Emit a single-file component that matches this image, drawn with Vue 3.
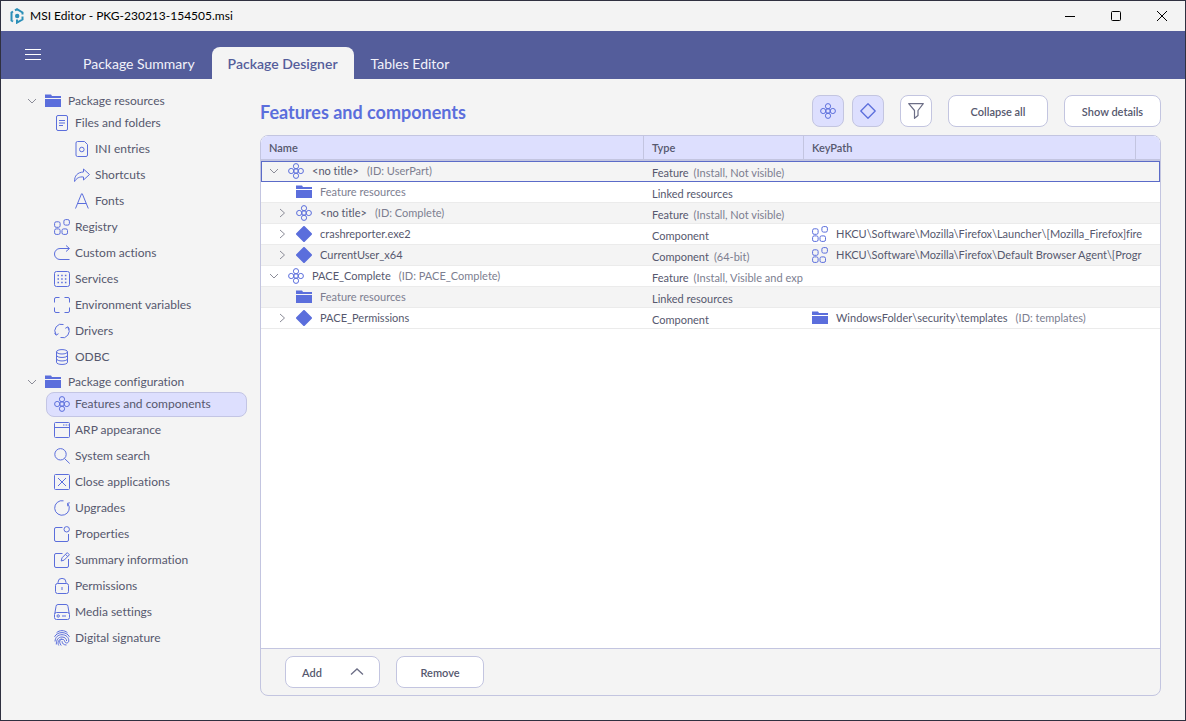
<script setup>
import { ref } from 'vue'

const tabs = ['Package Summary', 'Package Designer', 'Tables Editor']
const activeTab = ref('Package Designer')
const activeItem = ref('Features and components')

const groups = [
  {
    label: 'Package resources',
    items: [
      { label: 'Files and folders', icon: 'file' },
      { label: 'INI entries', icon: 'ini', nested: true },
      { label: 'Shortcuts', icon: 'shortcut', nested: true },
      { label: 'Fonts', icon: 'font', nested: true },
      { label: 'Registry', icon: 'registry' },
      { label: 'Custom actions', icon: 'action' },
      { label: 'Services', icon: 'services' },
      { label: 'Environment variables', icon: 'env' },
      { label: 'Drivers', icon: 'drivers' },
      { label: 'ODBC', icon: 'database' }
    ]
  },
  {
    label: 'Package configuration',
    items: [
      { label: 'Features and components', icon: 'feature' },
      { label: 'ARP appearance', icon: 'window' },
      { label: 'System search', icon: 'search' },
      { label: 'Close applications', icon: 'close-app' },
      { label: 'Upgrades', icon: 'upgrade' },
      { label: 'Properties', icon: 'properties' },
      { label: 'Summary information', icon: 'edit' },
      { label: 'Permissions', icon: 'lock' },
      { label: 'Media settings', icon: 'media' },
      { label: 'Digital signature', icon: 'fingerprint' }
    ]
  }
]

const rows = [
  { level: 0, toggle: 'down', icon: 'feature', name: '<no title>', id: '(ID: UserPart)', type: 'Feature', note: '(Install, Not visible)' },
  { level: 1, icon: 'folder', name: 'Feature resources', muted: true, type: 'Linked resources' },
  { level: 1, toggle: 'right', icon: 'feature', name: '<no title>', id: '(ID: Complete)', type: 'Feature', note: '(Install, Not visible)' },
  { level: 1, toggle: 'right', icon: 'component', name: 'crashreporter.exe2', type: 'Component', keyIcon: 'registry', key: 'HKCU\\Software\\Mozilla\\Firefox\\Launcher\\[Mozilla_Firefox]fire' },
  { level: 1, toggle: 'right', icon: 'component', name: 'CurrentUser_x64', type: 'Component', note: '(64-bit)', keyIcon: 'registry', key: 'HKCU\\Software\\Mozilla\\Firefox\\Default Browser Agent\\[Progr' },
  { level: 0, toggle: 'down', icon: 'feature', name: 'PACE_Complete', id: '(ID: PACE_Complete)', type: 'Feature', note: '(Install, Visible and exp' },
  { level: 1, icon: 'folder', name: 'Feature resources', muted: true, type: 'Linked resources' },
  { level: 1, toggle: 'right', icon: 'component', name: 'PACE_Permissions', type: 'Component', keyIcon: 'folder', key: 'WindowsFolder\\security\\templates', keyId: '(ID: templates)' }
]
const selectedRow = ref(0)
</script>

<template>
  <div class="window">
    <svg class="sprite" aria-hidden="true">
      <symbol id="i-folder" viewBox="0 0 16 16"><path d="M0 1.500h6l1 1.500H16v2H0z M0 6h16v8H0z" fill="currentColor" stroke="none" /></symbol>
      <symbol id="i-file" viewBox="0 0 16 16"><rect x="2.500" y=".5" width="11" height="15" rx="1.500" /><path d="M5 5.500h6M5 8h6M5 10.500h4" /></symbol>
      <symbol id="i-ini" viewBox="0 0 16 16"><path d="M3.500.5h7l3 3v10.500a1.500 1.500 0 0 1-1.500 1.500H3.500A1.500 1.500 0 0 1 2 14V2A1.500 1.500 0 0 1 3.500.5z" /><circle cx="7.800" cy="8.500" r="2.300" /></symbol>
      <symbol id="i-shortcut" viewBox="0 0 16 16"><path d="M9.500 2l6 5.500-6 5.500v-3C5.500 9.500 2.500 11 .6 14.500.2 9 3.500 5.200 9.500 5z" stroke-linejoin="round" /></symbol>
      <symbol id="i-font" viewBox="0 0 16 16"><path d="M1.500 15.500L7.500.8h.8l6 14.700M3.800 10.500h8.400" /></symbol>
      <symbol id="i-registry" viewBox="0 0 16 16"><rect x=".6" y="2.800" width="5.500" height="5.500" rx="1.600" /><rect x="9.900" y=".6" width="5.500" height="5.500" rx="1.600" /><rect x=".6" y="9.900" width="5.500" height="5.500" rx="1.600" /><rect x="8" y="9.900" width="5.500" height="5.500" rx="1.600" /></symbol>
      <symbol id="i-action" viewBox="0 0 16 16"><path d="M15 3.500H6a5.500 5.500 0 0 0 0 11h9.500M12 .5l3.500 3-3.500 3" /></symbol>
      <symbol id="i-services" viewBox="0 0 16 16"><rect x=".5" y=".5" width="15" height="15" rx="2" /><path d="M3.500 4.500h9M3.500 8h9M3.500 11.500h9" stroke-width="1.500" stroke-dasharray="1.500 2.200" /></symbol>
      <symbol id="i-env" viewBox="0 0 16 16"><path d="M5.500.5H2A1.500 1.500 0 0 0 .5 2v3.500M10.500.5H14A1.500 1.500 0 0 1 15.500 2v3.500M15.500 10.500V14a1.500 1.500 0 0 1-1.500 1.500h-3.500M5.500 15.500H2A1.500 1.500 0 0 1 .5 14v-3.500" /></symbol>
      <symbol id="i-drivers" viewBox="0 0 16 16"><path d="M9.500 1.500A6.600 6.600 0 0 0 2 11.500M.5 9.800L2 12.200l2.500-1.500M6.500 14.500A6.600 6.600 0 0 0 14 4.500M15.500 6.500L14 3.800l-2.700 1.500" /></symbol>
      <symbol id="i-database" viewBox="0 0 16 16"><ellipse cx="8" cy="2.800" rx="5.500" ry="2.200" /><path d="M2.500 2.800v10.400c0 3 11 3 11 0V2.800M2.500 6.200c0 3 11 3 11 0M2.500 9.700c0 3 11 3 11 0" /></symbol>
      <symbol id="i-feature" viewBox="0 0 16 16"><circle cx="8" cy="3.200" r="2.600" /><circle cx="3.200" cy="8" r="2.600" /><circle cx="12.800" cy="8" r="2.600" /><circle cx="8" cy="12.800" r="2.600" /><circle cx="8" cy="8" r="2.200" /></symbol>
      <symbol id="i-component" viewBox="0 0 16 16"><path d="M8 1l7 7-7 7-7-7z" fill="currentColor" stroke-linejoin="round" stroke-width="2" /></symbol>
      <symbol id="i-diamond" viewBox="0 0 16 16"><path d="M8 .8L15.200 8 8 15.200.8 8z" stroke-linejoin="round" stroke-width="1.300" /></symbol>
      <symbol id="i-window" viewBox="0 0 16 16"><rect x=".5" y=".5" width="15" height="15" rx="1" /><path d="M.5 5.500h15M9 3h1.500M11.500 3H13M13.700 3h1" /></symbol>
      <symbol id="i-search" viewBox="0 0 16 16"><circle cx="6.500" cy="6.300" r="5.700" /><path d="M10.500 10.500l5.200 5" /></symbol>
      <symbol id="i-close-app" viewBox="0 0 16 16"><rect x=".5" y=".5" width="15" height="15" rx="1" /><path d="M4 4l8 8M12 4l-8 8" /></symbol>
      <symbol id="i-upgrade" viewBox="0 0 16 16"><path d="M9.500.8a7.300 7.300 0 1 0 4.500 3M15.800 2.800l-2.300.5.3 3" /></symbol>
      <symbol id="i-properties" viewBox="0 0 16 16"><path d="M8.500 1.500H2A1.500 1.500 0 0 0 .5 3v11A1.500 1.500 0 0 0 2 15.500h11a1.500 1.500 0 0 0 1.500-1.500V8" /><circle cx="12.700" cy="3.300" r="2.700" /></symbol>
      <symbol id="i-edit" viewBox="0 0 16 16"><path d="M8.500 1.500H2A1.500 1.500 0 0 0 .5 3v11A1.500 1.500 0 0 0 2 15.500h11a1.500 1.500 0 0 0 1.500-1.500V7M7.200 9l.8-3.200L13.200.6l2.200 2.200-5.200 5.300zM11.500 2.300l2.200 2.300" /></symbol>
      <symbol id="i-lock" viewBox="0 0 16 16"><rect x="1.500" y="5.500" width="13" height="10" rx="2" /><path d="M4 5.500V4.300a4 4 0 0 1 8 0v1.200M8 9v3" /></symbol>
      <symbol id="i-media" viewBox="0 0 16 16"><rect x=".5" y="8.500" width="15" height="7" rx="2" /><path d="M.8 9.500L2 2.500a2 2 0 0 1 2-2h8a2 2 0 0 1 2 2l1.200 7M8 12h4" /><circle cx="4.200" cy="12" r="1.200" /></symbol>
      <symbol id="i-fingerprint" viewBox="0 0 16 16"><path d="M2.500 2.800C5.500-.1 10.500-.1 13.500 2.800M.5 6.800C3.500 1.200 12.500 1.200 15.500 6.800M1 11.500C1.300 7 4 4.700 8 4.700s7 2.800 6.800 6.300c-.3 2.500-3.800 2.700-4.100.2-.4-2.800-5.500-2.500-5 1 .2 1.300.8 2.300 1.500 3.300M2.300 14.500C2.300 10 4 7 8 7c3 0 4.600 2 4.600 4M4.800 15.500C3 12.500 4.500 9 8 9M8 11.200c.1 2.500 1.800 3.800 4.500 3.800" /></symbol>
      <symbol id="i-filter" viewBox="0 0 16 16"><path d="M.7.700h14.600L10 7.500V12.500L6.500 15.300V7.500z" stroke-linejoin="round" stroke-width="1.200" /></symbol>
      <symbol id="i-down" viewBox="0 0 16 16"><path d="M4 6l4 4 4-4" /></symbol>
      <symbol id="i-right" viewBox="0 0 16 16"><path d="M6 4l4.500 4L6 12" /></symbol>
      <symbol id="i-up" viewBox="0 0 16 16"><path d="M2 10.500L8 5l6 5.500" stroke-width="1.300" /></symbol>
    </svg>

    <header class="titlebar">
      <svg class="logo" viewBox="0 0 16 16" aria-hidden="true">
        <circle cx="8.200" cy="8" r="2.200" fill="#2b8fb8" />
        <path d="M4 3.500L2.500 4.500v8L4 13.500M6 2.300L8 1.200l5.500 3.300v2M13.500 8.500v3L8 14.600v-3.200" fill="none" stroke="#2b8fb8" stroke-width="2" />
      </svg>
      <span class="caption">MSI Editor - PKG-230213-154505.msi</span>
      <div class="controls">
        <button aria-label="Minimize"><svg viewBox="0 0 12 12"><path d="M1 6.500h10" /></svg></button>
        <button aria-label="Maximize"><svg viewBox="0 0 12 12"><rect x="1.500" y="1.500" width="9" height="9" rx="1" /></svg></button>
        <button aria-label="Close"><svg viewBox="0 0 12 12"><path d="M1 1l10 10M11 1L1 11" /></svg></button>
      </div>
    </header>

    <nav class="ribbon">
      <button class="menu" aria-label="Menu"><svg viewBox="0 0 16 12"><path d="M0 .5h16M0 5.500h16M0 10.500h16" /></svg></button>
      <div class="tabs">
        <button v-for="t in tabs" :key="t" class="tab" :class="{ active: t === activeTab }" @click="activeTab = t">{{ t }}</button>
      </div>
    </nav>

    <div class="body">
      <nav class="sidebar">
        <section v-for="g in groups" :key="g.label">
          <button class="group">
            <svg class="icon chevron"><use href="#i-down" /></svg>
            <svg class="icon"><use href="#i-folder" /></svg>
            <span>{{ g.label }}</span>
          </button>
          <a
            v-for="i in g.items"
            :key="i.label"
            href="#"
            class="item"
            :class="{ nested: i.nested, active: i.label === activeItem }"
            @click.prevent="activeItem = i.label"
          >
            <svg class="icon"><use :href="'#i-' + i.icon" /></svg>
            <span>{{ i.label }}</span>
          </a>
        </section>
      </nav>

      <main class="main">
        <div class="toolbar">
          <h1>Features and components</h1>
          <div class="toggles">
            <button class="btn square on" aria-label="Show features"><svg class="icon"><use href="#i-feature" /></svg></button>
            <button class="btn square on" aria-label="Show components"><svg class="icon"><use href="#i-diamond" /></svg></button>
          </div>
          <button class="btn square" aria-label="Filter"><svg class="icon filter"><use href="#i-filter" /></svg></button>
          <button class="btn collapse">Collapse all</button>
          <button class="btn details">Show details</button>
        </div>

        <div class="panel">
          <div class="grid">
            <table>
              <colgroup>
                <col class="c-name" /><col class="c-type" /><col /><col class="c-end" />
              </colgroup>
              <thead>
                <tr><th>Name</th><th>Type</th><th>KeyPath</th><th></th></tr>
              </thead>
              <tbody>
                <tr v-for="(r, n) in rows" :key="n" :class="{ selected: n === selectedRow }" @click="selectedRow = n">
                  <td>
                    <div class="cell name" :class="{ child: r.level }">
                      <button v-if="r.toggle" class="toggle" aria-label="Toggle row"><svg class="icon chevron"><use :href="'#i-' + r.toggle" /></svg></button>
                      <span v-else class="toggle"></span>
                      <svg class="icon"><use :href="'#i-' + r.icon" /></svg>
                      <span :class="{ note: r.muted }">{{ r.name }}</span>
                      <span v-if="r.id" class="note">{{ r.id }}</span>
                    </div>
                  </td>
                  <td>
                    <div class="cell type"><span>{{ r.type }}</span><span v-if="r.note" class="note">{{ r.note }}</span></div>
                  </td>
                  <td>
                    <div v-if="r.key" class="cell key">
                      <svg class="icon"><use :href="'#i-' + r.keyIcon" /></svg>
                      <span>{{ r.key }}</span>
                      <span v-if="r.keyId" class="note">{{ r.keyId }}</span>
                    </div>
                  </td>
                  <td></td>
                </tr>
              </tbody>
            </table>
          </div>
          <footer class="actions">
            <button class="btn add"><span>Add</span><svg class="icon up"><use href="#i-up" /></svg></button>
            <button class="btn remove">Remove</button>
          </footer>
        </div>
      </main>
    </div>
  </div>
</template>

<style>
body {
  margin: 0;
}
</style>

<style scoped>
* {
  box-sizing: border-box;
}
.window {
  display: flex;
  flex-direction: column;
  min-height: 100vh;
  border: 1px solid #2f3040;
  background: #f4f4f4;
  color: #56586e;
  font-family: Lato, "Open Sans", sans-serif;
  font-size: 12px;
  font-variant-ligatures: none;
}
button {
  margin: 0;
  padding: 0;
  border: 0;
  background: none;
  color: inherit;
  font: inherit;
  font-variant-ligatures: none;
}
.sprite {
  position: absolute;
  width: 0;
  height: 0;
}
.icon {
  flex: none;
  width: 16px;
  height: 16px;
  color: #5b6edc;
  fill: none;
  stroke: currentColor;
}
.icon.chevron {
  color: #8b8c98;
}
.titlebar {
  display: flex;
  align-items: center;
  height: 30px;
  padding-left: 8px;
  background: #f3f3f3;
  color: #000;
}
.logo {
  width: 16px;
  height: 16px;
}
.caption {
  margin-left: 5px;
  padding-bottom: 2px;
}
.controls {
  display: flex;
  height: 100%;
  margin-left: auto;
}
.controls button {
  display: grid;
  place-items: center;
  width: 46px;
}
.controls svg {
  width: 12px;
  height: 12px;
  fill: none;
  stroke: #000;
}
.ribbon {
  display: flex;
  align-items: flex-end;
  height: 48px;
  background: #545d9b;
  color: #f2f2fa;
}
.menu {
  display: grid;
  place-items: center;
  width: 32px;
  height: 48px;
  margin: 0 18px 0 16px;
}
.menu svg {
  width: 16px;
  height: 12px;
  fill: none;
  stroke: #fff;
}
.tabs {
  display: flex;
  gap: 1px;
}
.tab {
  height: 32px;
  padding: 0 16px;
  border-radius: 8px 8px 0 0;
  font-size: 14px;
}
.tab.active {
  background: #f4f4f4;
  color: #545d9b;
  font-weight: 600;
}
.body {
  display: flex;
  flex: 1;
}
.sidebar {
  flex: none;
  width: 259px;
  padding: 11px 13px 0 23px;
}
.group {
  display: flex;
  align-items: center;
  width: 100%;
  height: 21px;
}
.group .chevron {
  margin-right: 5px;
}
.group span {
  margin-left: 7px;
}
.item {
  display: flex;
  align-items: center;
  gap: 5px;
  height: 25px;
  margin: 0 0 1px 22px;
  padding: 0 0 1px 7px;
  border: 1px solid transparent;
  border-radius: 8px;
  color: inherit;
  line-height: 14px;
  text-decoration: none;
}
.item.nested {
  padding-left: 27px;
}
.item.active {
  border-color: #c3c5e4;
  background: #dddffe;
}
.main {
  display: flex;
  flex: 1;
  flex-direction: column;
  min-width: 0;
  padding: 16px 24px 24px 0;
}
.toolbar {
  display: flex;
  align-items: center;
  gap: 16px;
  margin-bottom: 8px;
}
h1 {
  flex: 1;
  margin: 0;
  padding-top: 2px;
  color: #5b6edc;
  font-size: 18px;
  font-weight: 700;
}
.toggles {
  display: flex;
  gap: 8px;
}
.btn {
  display: flex;
  align-items: center;
  justify-content: center;
  height: 32px;
  border: 1px solid #c3c5e0;
  border-radius: 8px;
  background: #fff;
  font-size: 11px;
  font-weight: 600;
}
.square {
  width: 32px;
}
.on {
  background: #dddffe;
}
.filter,
.up {
  color: #6c6e86;
}
.collapse {
  width: 100px;
}
.details {
  width: 97px;
}
.panel {
  display: flex;
  flex: 1;
  flex-direction: column;
  overflow: hidden;
  border: 1px solid #c3c5e0;
  border-radius: 8px;
}
.grid {
  flex: 1;
  background: #fff;
}
table {
  width: 100%;
  border-spacing: 0;
  table-layout: fixed;
  font-size: 11px;
}
.c-name {
  width: 383px;
}
.c-type {
  width: 160px;
}
.c-end {
  width: 24px;
}
th {
  height: 25px;
  padding: 0 8px;
  border-right: 1px solid #c3c5e0;
  border-bottom: 2px solid #c3c5e0;
  background: #dddffe;
  font-weight: 600;
  text-align: left;
}
th:last-child {
  border-right: 0;
}
td {
  height: 21px;
  padding: 0;
  border-bottom: 1px solid #ebebeb;
}
tbody tr:nth-child(odd) {
  background: #f4f4f4;
}
tr.selected {
  outline: 1px solid #5b6bc8;
  outline-offset: -1px;
}
.cell {
  display: flex;
  align-items: center;
  height: 20px;
  margin-left: 8px;
  line-height: 16px;
  white-space: nowrap;
}
.note {
  color: #7c7e90;
}
.name {
  gap: 8px;
  margin-left: 5px;
}
.name.child {
  padding-left: 8px;
}
.toggle {
  display: flex;
  width: 16px;
  margin-right: -2px;
}
.type {
  gap: 5px;
  padding-top: 4px;
}
.key {
  gap: 8px;
}
.actions {
  display: flex;
  gap: 16px;
  padding: 7px 24px;
  border-top: 1px solid #c3c5e0;
}
.add {
  justify-content: space-between;
  width: 95px;
  padding: 0 14px 0 16px;
}
.remove {
  width: 88px;
}
</style>
